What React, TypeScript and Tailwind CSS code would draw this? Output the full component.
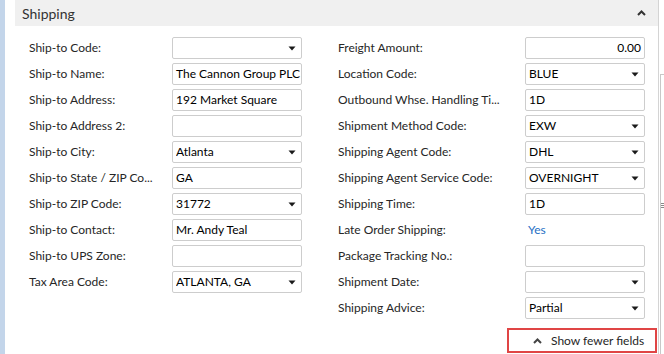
import React from "react";

type Field = { label: string; value?: string; kind: "text" | "select" | "link"; align?: "right" };

const left: Field[] = [
  { label: "Ship-to Code:", value: "", kind: "select" },
  { label: "Ship-to Name:", value: "The Cannon Group PLC", kind: "text" },
  { label: "Ship-to Address:", value: "192 Market Square", kind: "text" },
  { label: "Ship-to Address 2:", value: "", kind: "text" },
  { label: "Ship-to City:", value: "Atlanta", kind: "select" },
  { label: "Ship-to State / ZIP Co...", value: "GA", kind: "text" },
  { label: "Ship-to ZIP Code:", value: "31772", kind: "select" },
  { label: "Ship-to Contact:", value: "Mr. Andy Teal", kind: "text" },
  { label: "Ship-to UPS Zone:", value: "", kind: "text" },
  { label: "Tax Area Code:", value: "ATLANTA, GA", kind: "select" },
];

const right: Field[] = [
  { label: "Freight Amount:", value: "0.00", kind: "text", align: "right" },
  { label: "Location Code:", value: "BLUE", kind: "select" },
  { label: "Outbound Whse. Handling Ti...", value: "1D", kind: "text" },
  { label: "Shipment Method Code:", value: "EXW", kind: "select" },
  { label: "Shipping Agent Code:", value: "DHL", kind: "select" },
  { label: "Shipping Agent Service Code:", value: "OVERNIGHT", kind: "select" },
  { label: "Shipping Time:", value: "1D", kind: "text" },
  { label: "Late Order Shipping:", value: "Yes", kind: "link" },
  { label: "Package Tracking No.:", value: "", kind: "text" },
  { label: "Shipment Date:", value: "", kind: "select" },
  { label: "Shipping Advice:", value: "Partial", kind: "select" },
];

function Caret() {
  return (
    <svg width="8" height="5" viewBox="0 0 8 5" className="shrink-0">
      <path d="M0.5 0.5 H7.5 L4 4.5 Z" fill="#1a1a1a" />
    </svg>
  );
}

function ChevronUp({ color = "#444" }: { color?: string }) {
  return (
    <svg width="9" height="6" viewBox="0 0 9 6">
      <path d="M1 5 L4.5 1.5 L8 5" fill="none" stroke={color} strokeWidth="2" />
    </svg>
  );
}

function Row({ f, labelW, inputW }: { f: Field; labelW: string; inputW: string }) {
  return (
    <div className="flex items-center h-[22px]">
      <div className={`${labelW} shrink-0 text-[12px] text-[#262626] whitespace-nowrap`}>{f.label}</div>
      {f.kind === "link" ? (
        <div className={`${inputW} px-[3px] text-[12px] text-[#1f6fc5]`}>{f.value}</div>
      ) : f.kind === "select" ? (
        <div
          className={`${inputW} h-[22px] border border-[#cdcdcd] rounded-[2px] flex items-center gap-1 px-[3px] text-[12px] text-black bg-white`}
        >
          <span className="flex-1 whitespace-nowrap overflow-hidden">{f.value}</span>
          <span className="pr-[2px]"><Caret /></span>
        </div>
      ) : (
        <div
          className={`${inputW} h-[22px] border border-[#cdcdcd] rounded-[2px] flex items-center pl-[3px] ${f.align === "right" ? "pr-[3px] justify-end" : "pr-0"} text-[12px] text-black bg-white whitespace-nowrap`}
        >
          {f.value}
        </div>
      )}
    </div>
  );
}

export default function App() {
  return (
    <div
      className="w-[664px] h-[354px] bg-white flex overflow-hidden"
      style={{ fontFamily: "Lato, 'Noto Sans', sans-serif" }}
    >
      <div className="w-[5px] bg-[#c3d5ea] shrink-0" />
      <div className="w-[10px] shrink-0" />
      <main className="flex-1 flex flex-col">
        <div className="h-[26px] bg-[#f0f0f0] flex items-center justify-between pl-[7px] pr-[12px]">
          <span className="text-[14px] text-[#333]">Shipping</span>
          <ChevronUp color="#333" />
        </div>
        <div className="flex pt-[11px] pl-[14px]">
          <div className="flex flex-col gap-[4px] w-[309px]">
            {left.map((f) => (
              <Row key={f.label} f={f} labelW="w-[143px]" inputW="w-[130px]" />
            ))}
          </div>
          <div className="flex flex-col gap-[4px]">
            {right.map((f) => (
              <Row key={f.label} f={f} labelW="w-[187px]" inputW="w-[120px]" />
            ))}
          </div>
        </div>
        <div className="flex justify-end pt-[9px] pr-[1px]">
          <div className="w-[150px] h-[25px] border-2 border-[#e04545] flex items-center gap-[9px] pl-[24px] text-[12px] text-[#262626] whitespace-nowrap">
            <ChevronUp />
            <span>Show fewer fields</span>
          </div>
        </div>
      </main>
      <div className="w-[6px] shrink-0 border-l border-[#d4d4d4] flex flex-col">
        <div className="h-[74px]" />
        <div className="flex-1 border-l border-t border-[#c8c8c8] ml-[1px] flex flex-col items-center">
          <div className="h-[128px]" />
          <div className="w-[3px] flex flex-col gap-[1px]">
            <div className="h-px bg-[#888]" />
            <div className="h-px bg-[#888]" />
            <div className="h-px bg-[#888]" />
          </div>
        </div>
      </div>
    </div>
  );
}
